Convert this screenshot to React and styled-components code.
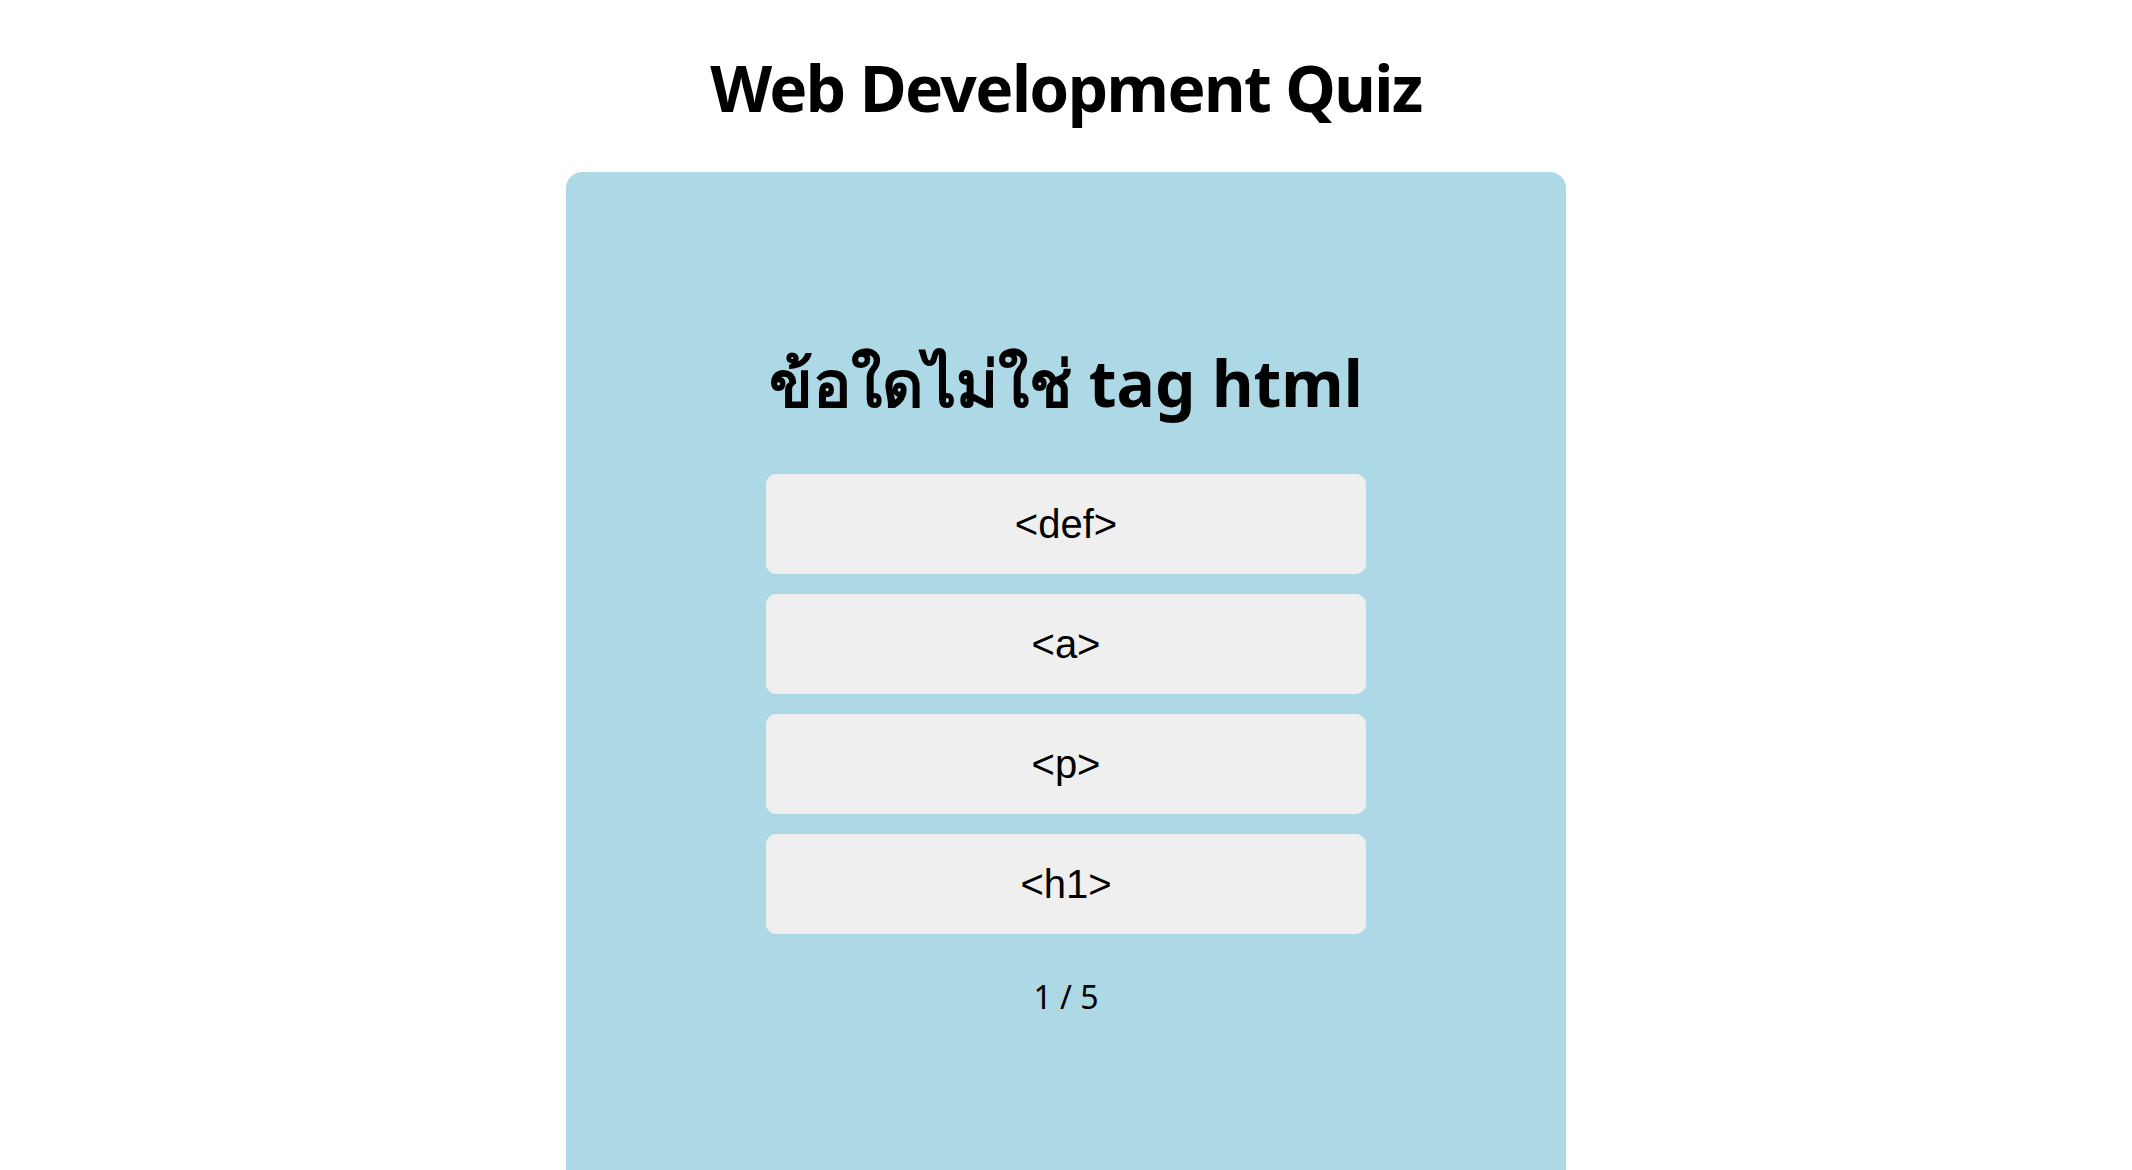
import styled, {createGlobalStyle} from "styled-components";

const GlobalStyle = createGlobalStyle`
    body {
        margin: 0;
        background: #ffffff;
        color: #000000;
        font-family: "Noto Sans", "Open Sans", sans-serif;
    }
`;

const options = ["<def>", "<a>", "<p>", "<h1>"];

export default function App() {
    return (
        <>
            <GlobalStyle />
            <Page>
                <Title>Web Development Quiz</Title>
                <QuizCard>
                    <Question>ข้อใดไม่ใช่ tag html</Question>
                    <Options>
                        {options.map((opt) => (
                            <OptionButton key={opt}>{opt}</OptionButton>
                        ))}
                    </Options>
                    <Counter>1 / 5</Counter>
                </QuizCard>
            </Page>
        </>
    );
}

const Page = styled.div`
    display: flex;
    flex-direction: column;
    align-items: center;
`;

const Title = styled.h1`
    margin: 49px 0 0;
    font-size: 64px;
    line-height: 77px;
    font-weight: 700;
    letter-spacing: -1.6px;
`;

const QuizCard = styled.div`
    display: flex;
    flex-direction: column;
    align-items: center;
    box-sizing: border-box;
    width: 1000px;
    min-height: 1060px;
    margin-top: 46px;
    padding-top: 172px;
    background: #add8e6;
    border-radius: 16px;
`;

const Question = styled.h2`
    margin: 0;
    font-size: 64px;
    line-height: 77px;
    font-weight: 700;
`;

const Options = styled.div`
    display: flex;
    flex-direction: column;
    gap: 20px;
    margin-top: 53px;
`;

const OptionButton = styled.button`
    width: 600px;
    height: 100px;
    border: none;
    border-radius: 10px;
    background: #efefef;
    color: #000000;
    font-family: "Liberation Sans", Arial, sans-serif;
    font-size: 40px;
    cursor: pointer;
`;

const Counter = styled.p`
    margin: 44px 0 0;
    font-size: 32px;
    line-height: 38px;
`;
